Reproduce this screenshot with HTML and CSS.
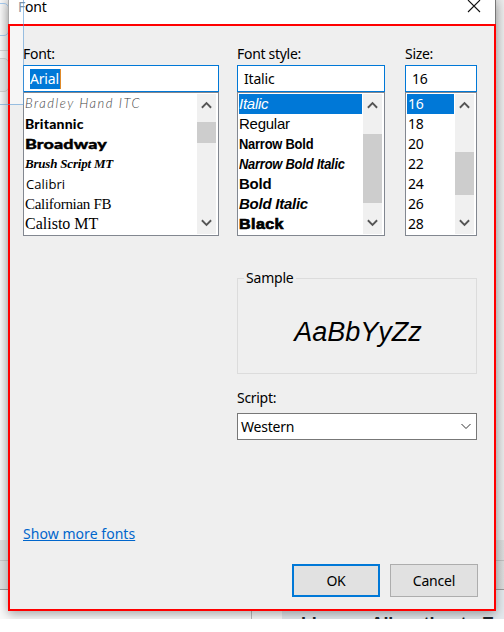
FILE: index.html
```html
<!DOCTYPE html>
<html lang="en">
<head>
<meta charset="utf-8">
<title>Font</title>
<link rel="stylesheet" href="styles.css">
</head>
<body>
<div class="desktop">
  <div class="back-left"><i class="bl-field"></i><i class="bl-rule"></i><i class="bl-button"></i><i class="bl-footer"></i></div>
  <div class="back-right"></div>
  <div class="page-behind"><span>License Allocation to E</span></div>
  <section class="dialog">
    <header class="titlebar"><h1><span class="dim">F</span>ont</h1>
      <svg class="close" width="14" height="14" viewBox="0 0 14 14"><path d="M1 1L13 13M13 1L1 13"/></svg>
    </header>
    <div class="body">
      <div class="pickers">
        <div class="picker">
          <label>Font:</label>
          <div class="input"><mark>Arial</mark></div>
          <div class="list">
            <ul>
              <li class="bradley"><span>Bradley Hand ITC</span></li>
              <li class="britannic"><span>Britannic</span></li>
              <li class="broadway"><span>Broadway</span></li>
              <li class="brush"><span>Brush Script MT</span></li>
              <li class="calibri"><span>Calibri</span></li>
              <li class="californian"><span>Californian FB</span></li>
              <li class="calisto"><span>Calisto MT</span></li>
            </ul>
            <div class="scroll t-font"><svg viewBox="0 0 10 7"><path d="M.8 6L5 1.8 9.2 6"/></svg><b></b><svg viewBox="0 0 10 7"><path d="M.8 1L5 5.2 9.2 1"/></svg></div>
          </div>
        </div>
        <div class="picker">
          <label>Font style:</label>
          <div class="input">Italic</div>
          <div class="list arial">
            <ul>
              <li class="selected italic">Italic</li>
              <li>Regular</li>
              <li class="bold narrow"><span>Narrow Bold</span></li>
              <li class="bold narrow italic"><span>Narrow Bold Italic</span></li>
              <li class="bold">Bold</li>
              <li class="bold italic">Bold Italic</li>
              <li class="black"><span>Black</span></li>
            </ul>
            <div class="scroll t-style"><svg viewBox="0 0 10 7"><path d="M.8 6L5 1.8 9.2 6"/></svg><b></b><svg viewBox="0 0 10 7"><path d="M.8 1L5 5.2 9.2 1"/></svg></div>
          </div>
        </div>
        <div class="picker">
          <label>Size:</label>
          <div class="input">16</div>
          <div class="list sizes">
            <ul>
              <li class="selected">16</li><li>18</li><li>20</li><li>22</li><li>24</li><li>26</li><li>28</li>
            </ul>
            <div class="scroll t-size"><svg viewBox="0 0 10 7"><path d="M.8 6L5 1.8 9.2 6"/></svg><b></b><svg viewBox="0 0 10 7"><path d="M.8 1L5 5.2 9.2 1"/></svg></div>
          </div>
        </div>
      </div>
      <div class="details">
        <fieldset><legend>Sample</legend><span>AaBbYyZz</span></fieldset>
        <label>Script:</label>
        <div class="select"><span>Western</span><svg width="10" height="7" viewBox="0 0 10 7"><path d="M.5 1L5 5.5 9.5 1"/></svg></div>
      </div>
      <a class="more">Show more fonts</a>
      <footer><button class="default">OK</button><button>Cancel</button></footer>
    </div>
  </section>
  <div class="guide"></div>
  <div class="tint"></div>
</div>
</body>
</html>
```
FILE: styles.css
```css
* { box-sizing: border-box; }
body { margin: 0; background: #fff; font: 14px/20px "Noto Sans", "Open Sans", sans-serif; letter-spacing: -.2px; color: #000; }
.desktop { position: relative; width: 504px; height: 619px; overflow: hidden; }
.back-left { position: absolute; left: 0; top: 0; width: 9px; height: 619px; background: linear-gradient(90deg, #f8f8f8, #e6e6e6); overflow: hidden; }
.back-left i { position: absolute; right: 0; width: 30px; }
.bl-field { top: 3px; height: 33px; border: 1px solid #a5c9ed; border-radius: 5px; }
.bl-rule { top: 50px; height: 1px; background: #d2d2d2; }
.bl-button { top: 58px; height: 34px; border: 1px solid #cfcfcf; border-radius: 5px; background: #e8e8e8; }
.bl-footer { top: 540px; height: 50px; border-bottom: 1px solid #999; background: linear-gradient(#e0e0e0 20px, #c8c8c8 20px, #c8c8c8 21px, #e0e0e0 21px); }
.back-right { position: absolute; right: 0; top: 0; width: 9px; height: 590px; border-bottom: 1px solid #999; background: linear-gradient(transparent 540px, rgba(0,0,0,.06) 540px, rgba(0,0,0,.06) 560px, rgba(0,0,0,.18) 560px, rgba(0,0,0,.18) 561px, rgba(0,0,0,.06) 561px), linear-gradient(90deg, #e0e0e0, #ebebeb); }
.page-behind { position: absolute; left: 0; top: 590px; width: 504px; height: 29px; overflow: hidden; background: linear-gradient(90deg, transparent 251px, #bbb 251px, #bbb 252px, transparent 252px, transparent 282px, #e4e9ed 282px), #fafafa; }
.page-behind span { position: absolute; left: 301px; top: 24px; font: bold 18px/20px "Liberation Sans", sans-serif; white-space: nowrap; color: #20272e; letter-spacing: -.2px; }
.dialog { position: absolute; left: 8px; top: 0; width: 488px; height: 611px; background: #fff; box-shadow: 0 3px 10px rgba(0,0,0,.35); border-right: 1px solid #777; border-left: 1px solid #aaa; }
.titlebar { display: flex; justify-content: space-between; height: 24px; padding: 0 14px 0 9px; }
h1 { margin: -3px 0 0; font: inherit; }
.dim { color: #8292a3; }
.close { stroke: #111; stroke-width: 1.1; fill: none; margin-top: -1px; }
.body { margin: 0 -1px; height: 587px; padding: 18px 16px 12px 13px; border: 2px solid #f00; background: #efefef; display: flex; flex-direction: column; }
.pickers { display: grid; grid-template-columns: 196px 148px 72px; column-gap: 18px; }
.picker:last-child { margin-left: 2px; margin-right: -2px; }
label { display: block; height: 21px; line-height: 20px; letter-spacing: -.3px; }
.input { height: 27px; border: 1px solid #0078d7; background: #fff; padding: 2px 6px 0; line-height: 21px; }
mark { display: inline-block; height: 20px; line-height: 20px; padding: 0 1px 0 0; background: #0078d7; color: #fff; border-right: 1px solid #df8a2a; }
.list { height: 144px; border: 1px solid #828790; background: #fff; padding: 1px 2px 1px 1px; display: grid; grid-template-columns: minmax(0, 1fr) 19px; column-gap: 1px; }
ul { margin: 0; padding: 0; list-style: none; min-width: 0; }
li { height: 20px; line-height: 20px; white-space: nowrap; padding-left: 1px; }
li span { display: inline-block; transform-origin: 0 50%; }
.selected { background: #0078d7; color: #fff; }
.scroll { background: #f0f0f0; display: flex; flex-direction: column; align-items: center; justify-content: space-between; position: relative; padding: 7px 0; }
.scroll svg { width: 11px; height: 8px; stroke: #555; stroke-width: 1.7; fill: none; }
.scroll b { position: absolute; left: 0; right: 0; background: #cdcdcd; }
.t-font b { top: 28px; height: 21px; }
.t-style b { top: 40px; height: 69px; }
.t-size b { top: 58px; height: 43px; }
.arial { font-family: "Liberation Sans", sans-serif; font-size: 15px; letter-spacing: -.25px; }
.arial li { padding-left: 0; }
.italic { font-style: italic; }
.bold { font-weight: bold; }
.narrow span { transform: scaleX(.86); }
.black { font-weight: bold; -webkit-text-stroke: .7px #000; letter-spacing: .4px; }
.black span { transform: scaleX(1.07); }
.list .bradley, .list .britannic, .list .broadway, .list .brush, .list .calisto, .list .californian { padding-left: 0; }
.bradley { font: 300 italic 13px/18px "Lato", sans-serif; color: #444; letter-spacing: 1.5px; }
.britannic { font: 900 14px/20px "Lato", sans-serif; letter-spacing: .2px; }
.broadway { font: 900 14px/20px "Lato", sans-serif; -webkit-text-stroke: .4px #000; letter-spacing: .1px; }
.broadway span { transform: scaleX(1.28); }
.brush { font: italic bold 13px/20px "Liberation Serif", serif; letter-spacing: -.2px; }
.calibri { font: 13px/20px "Open Sans", sans-serif; letter-spacing: .1px; }
.californian { font: 15px/20px "Liberation Serif", serif; letter-spacing: -.3px; }
.calisto { font: 16px/20px "Liberation Serif", serif; letter-spacing: 0; }
.details { width: 240px; margin: 32px 0 0 214px; }
fieldset { margin: 0 0 14px; padding: 0; height: 106px; border: 1px solid #dcdcdc; text-align: center; }
legend { margin: 0 auto 0 6px; padding: 0 2px; line-height: 20px; }
fieldset span { display: block; margin: 26px 0 0 2px; font: italic 27px/36px "Liberation Sans", sans-serif; letter-spacing: 0; }
.select { height: 27px; margin-top: 4px; padding: 0 5px 0 3px; border: 1px solid #777; background: #fff; display: flex; justify-content: space-between; align-items: center; }
.select svg { fill: none; stroke: #333; }
.more { width: max-content; margin-top: 84px; color: #0066cc; text-decoration: underline; letter-spacing: .05px; }
footer { display: flex; justify-content: flex-end; gap: 10px; margin-top: auto; }
button { width: 88px; height: 33px; padding: 0; border: 1px solid #adadad; background: #e1e1e1; color: #000; font: inherit; letter-spacing: inherit; }
.default { border: 2px solid #0078d7; }
.guide { position: absolute; left: 0; top: -1px; width: 24px; height: 106px; border: solid rgba(91,155,213,.6); border-width: 0 1px 1px 0; }
.tint { position: absolute; left: 10px; top: 26px; width: 13px; height: 78px; background: rgba(255,255,255,.45); }
```
